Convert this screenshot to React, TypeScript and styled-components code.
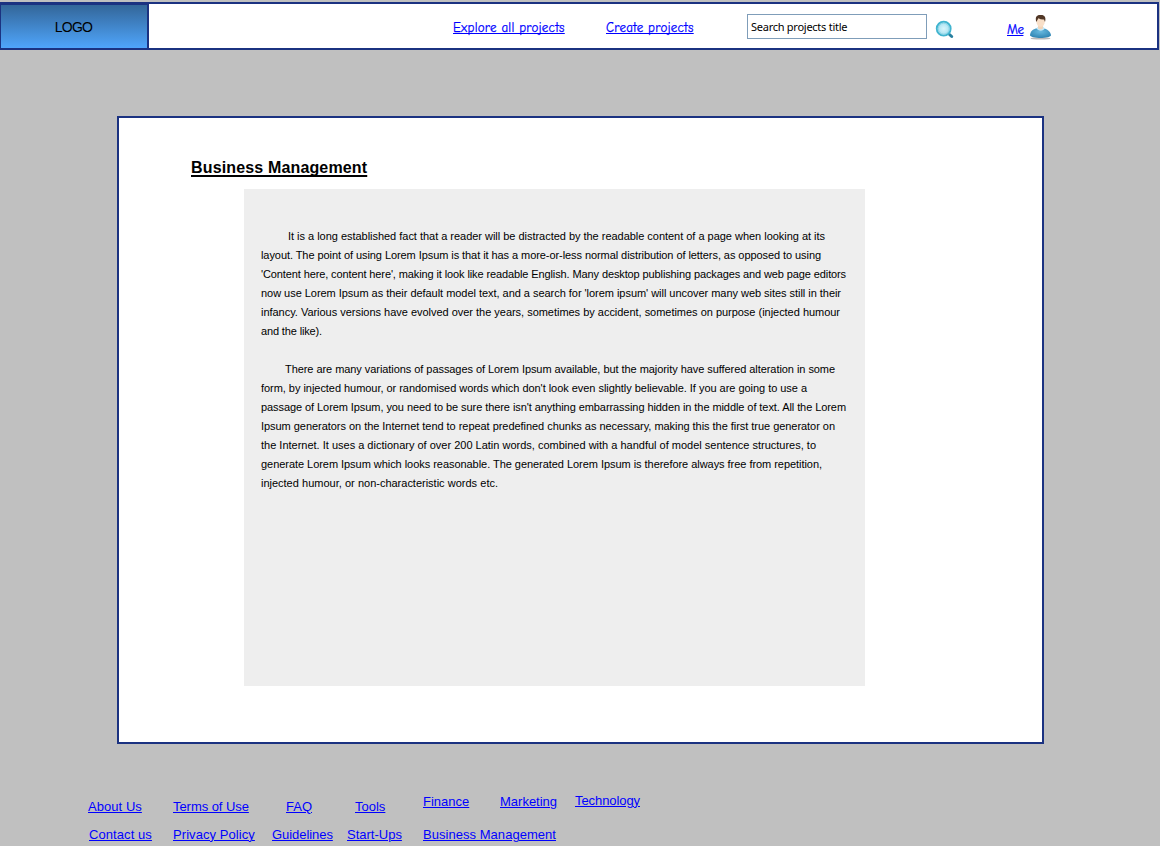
import React from "react";
import styled, { createGlobalStyle } from "styled-components";

const GlobalStyle = createGlobalStyle`
  * { box-sizing: border-box; }
  html, body { margin: 0; height: 100%; background: #c0c0c0; overflow: hidden; }
  body { font-family: "Liberation Sans", Arial, sans-serif; color: #000; }
`;

const Page = styled.div`
  display: flex;
  flex-direction: column;
  width: 1160px;
  height: 846px;
  padding-top: 2px;
  overflow: hidden;
`;

const Header = styled.header`
  display: flex;
  flex: none;
  width: 1159px;
  height: 48px;
  background: #fff;
  border: 2px solid #1b3281;
  border-left: 0;
`;

const Logo = styled.div`
  flex: none;
  width: 149px;
  height: 44px;
  border: 1px solid #1b3281;
  border-right-width: 2px;
  border-bottom: 0;
  background: linear-gradient(#336699, #4fa5fb);
  font-size: 14px;
  line-height: 45px;
  text-align: center;
  letter-spacing: -0.8px;
  padding-right: 1px;
`;

const Link = styled.a<{ $left?: number; $top?: number; $width: number; $spacing?: number }>`
  flex: none;
  width: ${(p) => p.$width}px;
  height: 16px;
  margin-left: ${(p) => p.$left ?? 0}px;
  margin-top: ${(p) => p.$top ?? 0}px;
  font-size: 13px;
  line-height: 16px;
  letter-spacing: ${(p) => p.$spacing ?? 0}px;
  white-space: nowrap;
  color: #0000ff;
  text-decoration: underline;
  text-decoration-thickness: 1px;
  text-underline-offset: 1px;
`;

const NavLink = styled(Link)`
  font-family: "Comic Sans MS", "Comic Neue", Lato, sans-serif;
  text-underline-offset: 1px;
  text-decoration-skip-ink: none;
  -webkit-text-stroke: 0.25px #0000ff;
`;

const SearchInput = styled.input`
  flex: none;
  width: 180px;
  height: 25px;
  margin: 10px 0 0 53px;
  padding: 0 3px 1px;
  border: 1px solid #7f9db9;
  border-radius: 0;
  outline: 0;
  background: #fff;
  color: #000;
  font: 11px Tahoma, "Noto Sans", sans-serif;
  letter-spacing: -0.26px;
`;

const SearchIcon = styled.svg`
  flex: none;
  margin: 16px 0 0 8px;
`;

const UserIcon = styled.svg`
  flex: none;
  margin: 9px 0 0 5px;
`;

const Card = styled.main`
  flex: none;
  width: 927px;
  height: 628px;
  margin: 66px 0 0 117px;
  padding: 40px 0 0 72px;
  border: 2px solid #1b3281;
  background: #fff;
`;

const Title = styled.h1`
  margin: 0;
  height: 31px;
  font-size: 16px;
  line-height: 20px;
  font-weight: bold;
  letter-spacing: 0.15px;
  text-decoration: underline;
  text-decoration-thickness: 2px;
  text-underline-offset: 2px;
  text-decoration-skip-ink: none;
`;

const Article = styled.article`
  width: 621px;
  height: 497px;
  margin-left: 53px;
  padding: 38px 0 0 17px;
  background: #eee;
`;

const Paragraph = styled.p`
  margin: 0 0 19px;
  font-size: 11px;
  line-height: 19px;
`;

const Line = styled.span<{ $width: number; $indent?: number; $spacing?: number }>`
  display: block;
  width: ${(p) => p.$width}px;
  height: 19px;
  margin-left: ${(p) => p.$indent ?? 0}px;
  letter-spacing: ${(p) => p.$spacing ?? 0}px;
  white-space: nowrap;
  text-align: justify;
  text-align-last: justify;
`;

const Footer = styled.footer`
  display: flex;
  flex: none;
  flex-direction: column;
  margin-top: 49px;
`;

const FooterRow = styled.nav<{ $height: number }>`
  display: flex;
  height: ${(p) => p.$height}px;
`;

type TextLine = { text: string; width: number; indent?: number; spacing?: number };

const paragraphs: TextLine[][] = [
  [
    { text: "It is a long established fact that a reader will be distracted by the readable content of a page when looking at its", width: 537, indent: 27, spacing: -0.035 },
    { text: "layout. The point of using Lorem Ipsum is that it has a more-or-less normal distribution of letters, as opposed to using", width: 560, spacing: -0.075 },
    { text: "'Content here, content here', making it look like readable English. Many desktop publishing packages and web page editors", width: 585, spacing: -0.12 },
    { text: "now use Lorem Ipsum as their default model text, and a search for 'lorem ipsum' will uncover many web sites still in their", width: 580, spacing: -0.045 },
    { text: "infancy. Various versions have evolved over the years, sometimes by accident, sometimes on purpose (injected humour", width: 579, spacing: -0.035 },
    { text: "and the like).", width: 61, spacing: -0.15 },
  ],
  [
    { text: "There are many variations of passages of Lorem Ipsum available, but the majority have suffered alteration in some", width: 550, indent: 24, spacing: -0.07 },
    { text: "form, by injected humour, or randomised words which don't look even slightly believable. If you are going to use a", width: 546, spacing: -0.05 },
    { text: "passage of Lorem Ipsum, you need to be sure there isn't anything embarrassing hidden in the middle of text. All the Lorem", width: 585, spacing: -0.075 },
    { text: "Ipsum generators on the Internet tend to repeat predefined chunks as necessary, making this the first true generator on", width: 574, spacing: -0.05 },
    { text: "the Internet. It uses a dictionary of over 200 Latin words, combined with a handful of model sentence structures, to", width: 555, spacing: -0.005 },
    { text: "generate Lorem Ipsum which looks reasonable. The generated Lorem Ipsum is therefore always free from repetition,", width: 561, spacing: -0.05 },
    { text: "injected humour, or non-characteristic words etc.", width: 237, spacing: -0.01 },
  ],
];

export default function App() {
  return (
    <Page>
      <GlobalStyle />
      <Header>
        <Logo>LOGO</Logo>
        <NavLink $left={304} $top={16} $width={112} $spacing={0.25}>Explore all projects</NavLink>
        <NavLink $left={41} $top={16} $width={88} $spacing={0.25}>Create projects</NavLink>
        <SearchInput defaultValue="Search projects title" />
        <SearchIcon width="20" height="20" viewBox="0 0 20 20">
          <defs>
            <radialGradient id="lens">
              <stop offset="0" stopColor="#d9f5fb" />
              <stop offset="1" stopColor="#a2dff0" />
            </radialGradient>
          </defs>
          <path d="M14.5 14.5l2.2 2" stroke="#287f9f" strokeWidth="3" strokeLinecap="round" />
          <circle cx="8.7" cy="8.7" r="7" fill="url(#lens)" stroke="#40b4cf" strokeWidth="1.8" />
          <circle cx="8.7" cy="8.7" r="5.5" fill="none" stroke="#82cfe2" strokeWidth="0.8" />
        </SearchIcon>
        <NavLink $left={52} $top={18} $width={16} $spacing={-0.5}>Me</NavLink>
        <UserIcon width="24" height="28" viewBox="0 0 24 28">
          <defs>
            <radialGradient id="shirt" cx=".5" cy=".35" r=".65">
              <stop offset="0" stopColor="#67b9df" />
              <stop offset="1" stopColor="#2f85b3" />
            </radialGradient>
          </defs>
          <ellipse cx="12.5" cy="25.4" rx="10" ry="1.2" fill="#b9b9b9" />
          <path d="M2 22.5C2 18 6 15.5 9 15.2h6c4 .5 8 3.5 8 7.3-1.8 3.3-19 3.3-21 0z" fill="url(#shirt)" />
          <path d="M8.5 15.2l1.3-1.4h5.5l1.5 1.4c-.9 3.3-7.2 3.3-8.3 0z" fill="#c5e9f7" />
          <path d="M10 11h5v4.3c-1 1.5-4 1.5-5 0z" fill="#f1d4b9" />
          <ellipse cx="12.6" cy="8.5" rx="4.2" ry="5.2" fill="#f8dfc8" />
          <path d="M8.3 9C7 4 8.5 2 12 2c4-.7 6.5 1.8 5 7l-1-2.5c-2 .2-4-.2-5.6-1.2z" fill="#513726" />
        </UserIcon>
      </Header>
      <Card>
        <Title>Business Management</Title>
        <Article>
          {paragraphs.map((lines, i) => (
            <Paragraph key={i}>
              {lines.map((line) => (
                <Line key={line.text} $width={line.width} $indent={line.indent} $spacing={line.spacing}>
                  {line.text}
                </Line>
              ))}
            </Paragraph>
          ))}
        </Article>
      </Card>
      <Footer>
        <FooterRow $height={34}>
          <Link $left={88} $top={6} $width={54} $spacing={0.05}>About Us</Link>
          <Link $left={31} $top={6} $width={76} $spacing={-0.06}>Terms of Use</Link>
          <Link $left={37} $top={6} $width={26}>FAQ</Link>
          <Link $left={43} $top={6} $width={30}>Tools</Link>
          <Link $left={38} $top={1} $width={46}>Finance</Link>
          <Link $left={31} $top={1} $width={57}>Marketing</Link>
          <Link $left={18} $top={0} $width={65} $spacing={-0.08}>Technology</Link>
        </FooterRow>
        <FooterRow $height={19}>
          <Link $left={89} $width={63} $spacing={0.08}>Contact us</Link>
          <Link $left={21} $width={82} $spacing={0.07}>Privacy Policy</Link>
          <Link $left={17} $width={61} $spacing={-0.06}>Guidelines</Link>
          <Link $left={14} $width={55}>Start-Ups</Link>
          <Link $left={21} $width={133} $spacing={0.04}>Business Management</Link>
        </FooterRow>
      </Footer>
    </Page>
  );
}
